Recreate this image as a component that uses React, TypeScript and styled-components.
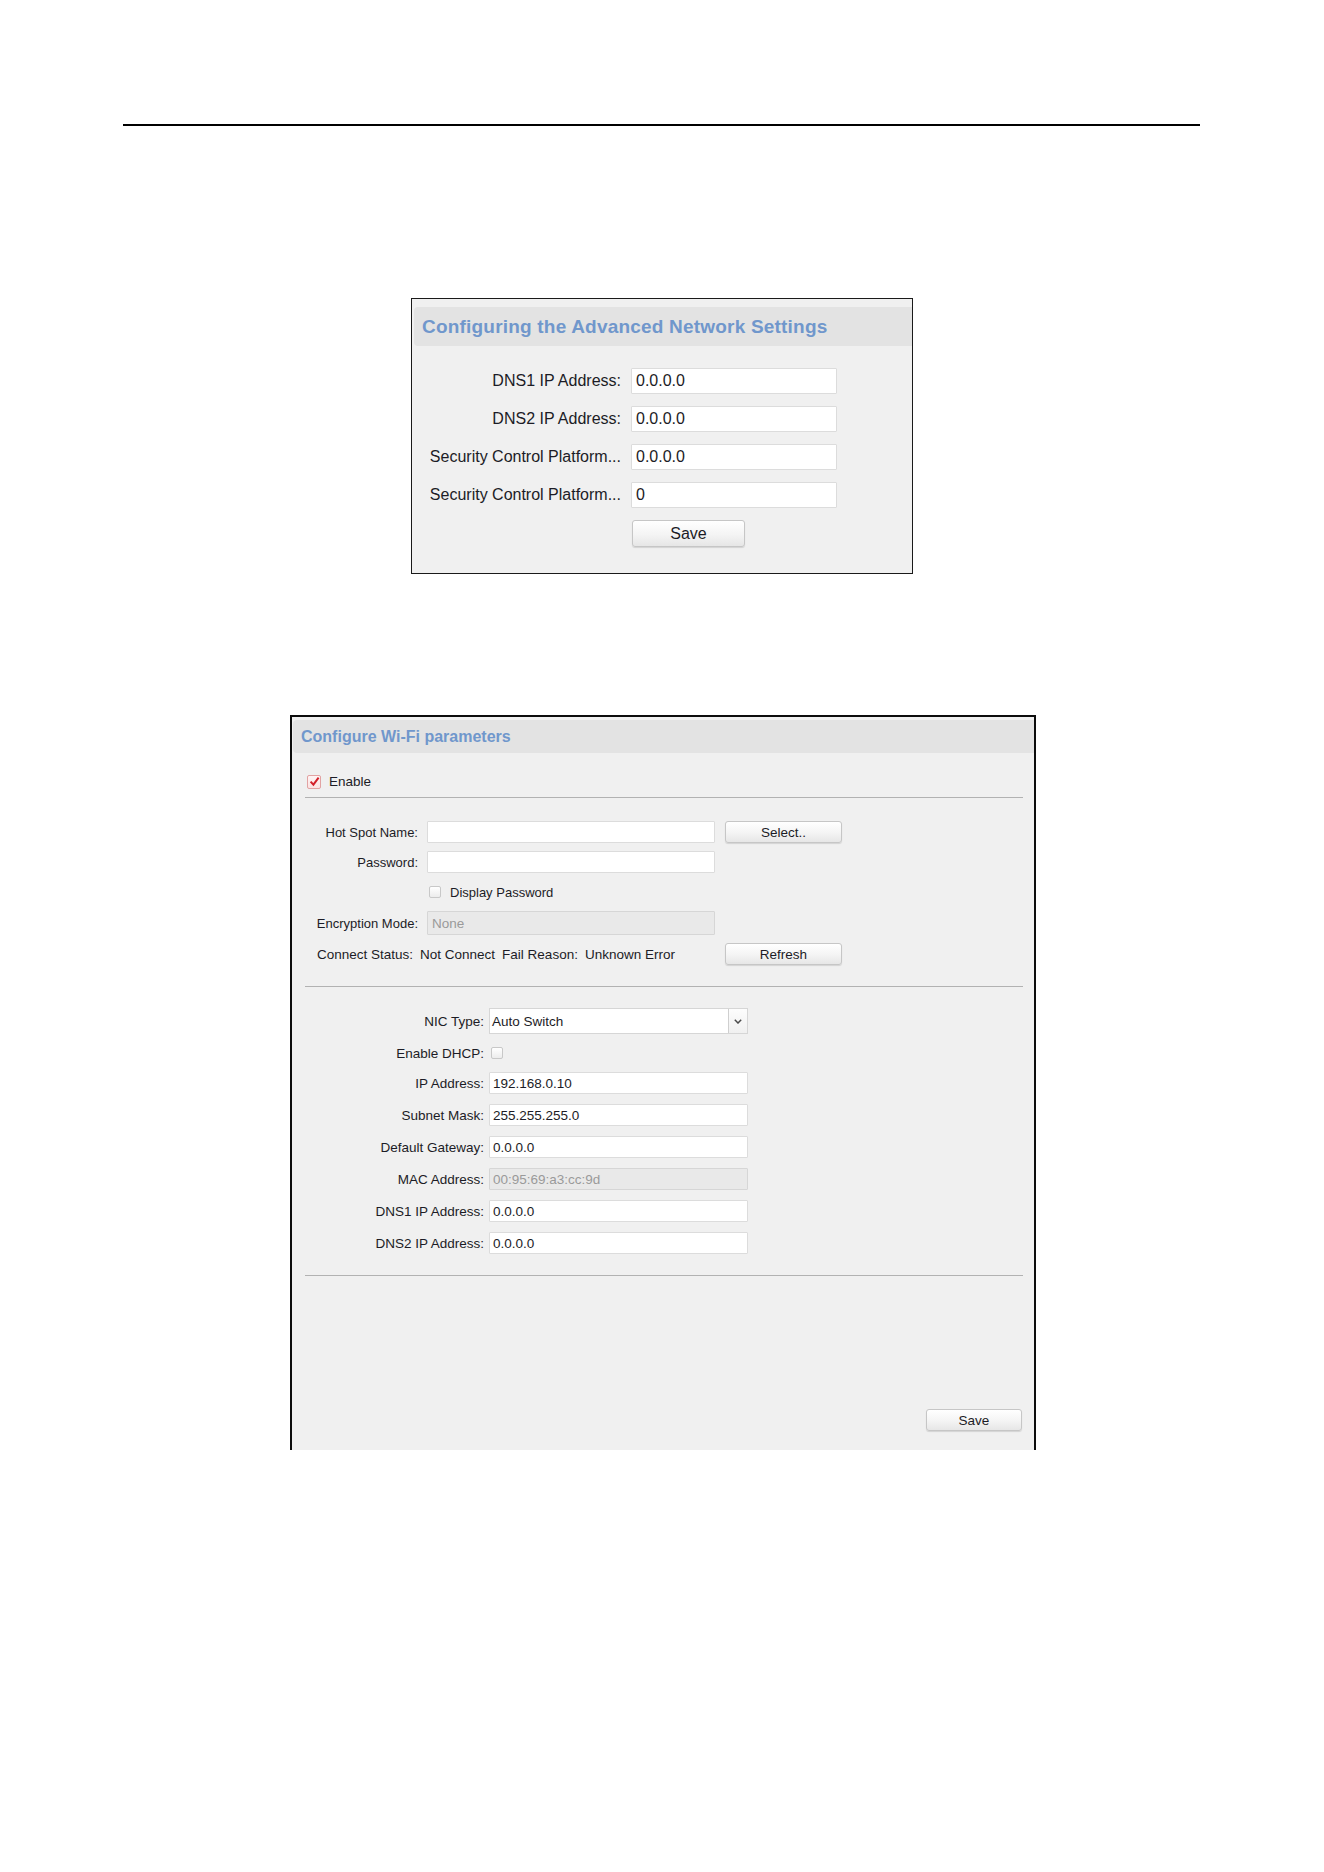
import React from "react";
import styled, { createGlobalStyle } from "styled-components";

const GlobalStyle = createGlobalStyle`
  html, body {
    margin: 0;
    padding: 0;
    background: #fff;
  }
  body {
    font-family: "Liberation Sans", Arial, sans-serif;
    color: #1c1c26;
  }
`;

const Page = styled.div`
  width: 1324px;
  min-height: 1872px;
  box-sizing: border-box;
  padding-top: 124px;
  background: #fff;
`;

const Rule = styled.div`
  margin-left: 123px;
  width: 1077px;
  height: 2px;
  background: #000;
`;

/* ---------- shared widgets ---------- */

const PanelTitle = styled.h2<{ $height: number; $size: number; $indent: number }>`
  margin: 0;
  height: ${({ $height }) => $height}px;
  display: flex;
  align-items: center;
  padding-left: 8px;
  margin-left: ${({ $indent }) => $indent}px;
  background: #e3e3e3;
  border-radius: 4px 0 0 4px;
  color: #7097cc;
  font-size: ${({ $size }) => $size}px;
  font-weight: bold;
  letter-spacing: ${({ $size }) => ($size > 17 ? 0.2 : 0)}px;
  white-space: nowrap;
`;

const Label = styled.label<{ $size: number }>`
  display: flex;
  align-items: center;
  justify-content: flex-end;
  font-size: ${({ $size }) => $size}px;
  white-space: nowrap;
  color: #1c1c26;
`;

const Field = styled.input<{ $size: number; $pad: number }>`
  box-sizing: border-box;
  width: 100%;
  height: 100%;
  margin: 0;
  padding: 0 0 0 ${({ $pad }) => $pad}px;
  border: 1px solid #dcdcdc;
  border-radius: 1px;
  background: #fff;
  font-family: "Liberation Sans", Arial, sans-serif;
  font-size: ${({ $size }) => $size}px;
  color: #1c1c26;
  outline: none;

  &:disabled {
    background: #e9e9e9;
    border-color: #d6d6d6;
    color: #9a9a9a;
  }
`;

const Button = styled.button<{ $w: number; $h: number; $size: number }>`
  box-sizing: border-box;
  width: ${({ $w }) => $w}px;
  height: ${({ $h }) => $h}px;
  margin: 0;
  padding: 0;
  border: 1px solid #c6c6c6;
  border-radius: 3px;
  background: linear-gradient(#ffffff, #f4f4f4 55%, #e6e6e6);
  box-shadow: 0 1px 1px rgba(0, 0, 0, 0.12);
  font-family: "Liberation Sans", Arial, sans-serif;
  font-size: ${({ $size }) => $size}px;
  color: #1c1c26;
`;

const Box = styled.span<{ $checked?: boolean; $size: number }>`
  box-sizing: border-box;
  flex: none;
  display: inline-flex;
  align-items: center;
  justify-content: center;
  width: ${({ $size }) => $size}px;
  height: ${({ $size }) => $size}px;
  border: 1px solid ${({ $checked }) => ($checked ? "#e2a3a3" : "#c8c8c8")};
  border-radius: 2px;
  background: ${({ $checked }) =>
    $checked ? "linear-gradient(#fff4f4, #fbe2e2)" : "linear-gradient(#ffffff, #ececec)"};
`;

const CheckBox = ({ checked, size }: { checked?: boolean; size: number }) => (
  <Box $checked={checked} $size={size}>
    {checked && (
      <svg width={size - 3} height={size - 3} viewBox="0 0 11 11">
        <path d="M1.6 5.6 L4.4 8.6 L9.6 1.6" fill="none" stroke="#d3202a" strokeWidth="2" />
      </svg>
    )}
  </Box>
);

/* ---------- advanced network settings ---------- */

const AdvancedFrame = styled.section`
  margin: 172px 0 0 411px;
  width: 502px;
  box-sizing: border-box;
  border: 1px solid #1a1a1a;
  background: #f0f0f0;
  padding: 8px 0 27px 0;
`;

const AdvancedForm = styled.div`
  display: grid;
  grid-template-columns: 202px 206px;
  grid-auto-rows: 26px;
  column-gap: 10px;
  row-gap: 12px;
  padding: 22px 0 0 7px;
`;

const FormAction = styled.div`
  grid-column: 2;
  padding-left: 1px;
`;

const advancedRows = [
  ["DNS1 IP Address:", "0.0.0.0"],
  ["DNS2 IP Address:", "0.0.0.0"],
  ["Security Control Platform...", "0.0.0.0"],
  ["Security Control Platform...", "0"],
];

const AdvancedSettings = () => (
  <AdvancedFrame>
    <PanelTitle $height={39} $size={19} $indent={2}>
      Configuring the Advanced Network Settings
    </PanelTitle>
    <AdvancedForm>
      {advancedRows.map(([label, value], i) => (
        <React.Fragment key={i}>
          <Label $size={16}>{label}</Label>
          <Field $size={16} $pad={4} value={value} readOnly />
        </React.Fragment>
      ))}
      <FormAction>
        <Button $w={113} $h={27} $size={16}>
          Save
        </Button>
      </FormAction>
    </AdvancedForm>
  </AdvancedFrame>
);

/* ---------- wi-fi parameters ---------- */

const WifiFrame = styled.section`
  margin: 141px 0 0 290px;
  width: 746px;
  height: 735px;
  box-sizing: border-box;
  border: 2px solid #0c0c0c;
  border-bottom: none;
  background: #f0f0f0;
  padding-top: 3px;
  display: flex;
  flex-direction: column;
`;

const Section = styled.div`
  margin: 0 11px 0 13px;
  border-bottom: 1px solid #b2b2b2;
`;

const EnableRow = styled(Section)`
  display: flex;
  align-items: center;
  gap: 8px;
  padding: 21px 0 8px 2px;
  font-size: 13.5px;
`;

const WifiGrid = styled(Section)`
  display: grid;
  grid-template-columns: 113px 288px 118px;
  grid-template-rows: 22px 22px 22px 24px 22px;
  column-gap: 9px;
  row-gap: 8px;
  padding: 23px 0 21px 0;
`;

const NetworkGrid = styled(Section)`
  display: grid;
  grid-template-columns: 179px 259px;
  grid-template-rows: 26px 18px repeat(6, 22px);
  column-gap: 5px;
  row-gap: 10px;
  padding: 21px 0 21px 0;
`;

const CellButton = styled.div`
  padding-left: 1px;
`;

const InlineCheck = styled.div<{ $pad: number; $gap: number }>`
  display: flex;
  align-items: center;
  gap: ${({ $gap }) => $gap}px;
  padding-left: ${({ $pad }) => $pad}px;
  font-size: 13px;
`;

const Status = styled.div`
  grid-column: 1 / 3;
  display: flex;
  align-items: center;
  gap: 7px;
  padding-left: 12px;
  font-size: 13.5px;
  white-space: nowrap;
`;

const Select = styled.div`
  box-sizing: border-box;
  display: flex;
  height: 100%;
  border: 1px solid #d6d6d6;
  background: #fff;
  font-size: 13.5px;
`;

const SelectValue = styled.span`
  flex: 1;
  display: flex;
  align-items: center;
  padding-left: 2px;
`;

const SelectArrow = styled.span`
  width: 18px;
  display: flex;
  align-items: center;
  justify-content: center;
  border-left: 1px solid #cfcfcf;
  background: linear-gradient(#fdfdfd, #f0f0f0);
`;

const Footer = styled.div`
  flex: 1;
  display: flex;
  align-items: flex-end;
  justify-content: flex-end;
  padding: 0 12px 19px 0;
`;

const networkRows: [string, string, boolean?][] = [
  ["IP Address:", "192.168.0.10"],
  ["Subnet Mask:", "255.255.255.0"],
  ["Default Gateway:", "0.0.0.0"],
  ["MAC Address:", "00:95:69:a3:cc:9d", true],
  ["DNS1 IP Address:", "0.0.0.0"],
  ["DNS2 IP Address:", "0.0.0.0"],
];

const WifiSettings = () => (
  <WifiFrame>
    <PanelTitle $height={33} $size={16} $indent={1}>
      Configure Wi-Fi parameters
    </PanelTitle>

    <EnableRow>
      <CheckBox checked size={14} />
      <span>Enable</span>
    </EnableRow>

    <WifiGrid>
      <Label $size={13}>Hot Spot Name:</Label>
      <Field $size={13.5} $pad={3} value="" readOnly />
      <CellButton>
        <Button $w={117} $h={22} $size={13.5}>
          Select..
        </Button>
      </CellButton>

      <Label $size={13}>Password:</Label>
      <Field $size={13.5} $pad={3} type="password" value="" readOnly />
      <span />

      <span />
      <InlineCheck $pad={2} $gap={9}>
        <CheckBox size={12} />
        <span>Display Password</span>
      </InlineCheck>
      <span />

      <Label $size={13}>Encryption Mode:</Label>
      <Field $size={13.5} $pad={4} value="None" disabled />
      <span />

      <Status>
        <span>Connect Status:</span>
        <span>Not Connect</span>
        <span>Fail Reason:</span>
        <span>Unknown Error</span>
      </Status>
      <CellButton>
        <Button $w={117} $h={22} $size={13.5}>
          Refresh
        </Button>
      </CellButton>
    </WifiGrid>

    <NetworkGrid>
      <Label $size={13.5}>NIC Type:</Label>
      <Select>
        <SelectValue>Auto Switch</SelectValue>
        <SelectArrow>
          <svg width="8" height="5" viewBox="0 0 8 5">
            <path d="M0.8 0.8 L4 4 L7.2 0.8" fill="none" stroke="#4a4a4a" strokeWidth="1.5" />
          </svg>
        </SelectArrow>
      </Select>

      <Label $size={13.5}>Enable DHCP:</Label>
      <InlineCheck $pad={2} $gap={0}>
        <CheckBox size={12} />
      </InlineCheck>

      {networkRows.map(([label, value, locked]) => (
        <React.Fragment key={label}>
          <Label $size={13.5}>{label}</Label>
          <Field $size={13.5} $pad={3} value={value} readOnly disabled={locked} />
        </React.Fragment>
      ))}
    </NetworkGrid>

    <Footer>
      <Button $w={96} $h={22} $size={13.5}>
        Save
      </Button>
    </Footer>
  </WifiFrame>
);

export default function App() {
  return (
    <Page>
      <GlobalStyle />
      <Rule />
      <AdvancedSettings />
      <WifiSettings />
    </Page>
  );
}
